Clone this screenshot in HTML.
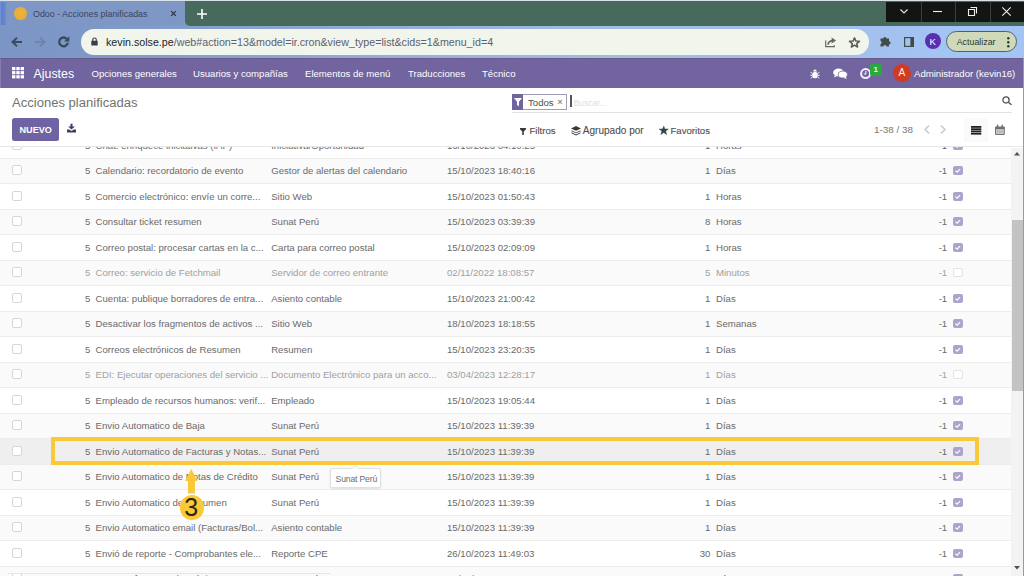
<!DOCTYPE html>
<html><head><meta charset="utf-8">
<style>
*{box-sizing:border-box;margin:0;padding:0}
html,body{width:1024px;height:576px;overflow:hidden;background:#fff;font-family:"Liberation Sans",sans-serif}
.a{position:absolute}
svg{position:absolute;overflow:visible}
#tabstrip{left:0;top:0;width:1024px;height:26px;background:#7e97c4}
.green{left:185px;top:0;width:839px;height:25.8px;background:#486a5c;border-bottom-left-radius:5px}
.topline{left:0;top:0;width:1024px;height:1.2px;background:#d9e2e6}
.tab{left:0;top:1.2px;width:185px;height:25px;background:#7e97c4}
.tabedge{left:0;top:1.5px;width:7px;height:23.5px;background:linear-gradient(90deg,#7d9ad6 0%,#5f80d0 20%,#6485cc 60%,#7e97c4 100%)}
.fav{left:14px;top:7.3px;width:13.2px;height:12.8px;border-radius:50%;background:radial-gradient(circle at 50% 45%,#ebb53c 0%,#e9ad3a 55%,#e6a640 100%)}
.tabtitle{left:33px;top:8.6px;font-size:8.9px;color:#3a4560;white-space:nowrap}
.winctl{left:886px;top:1.5px;width:138px;height:20.5px;background:#131514}
.sep{top:0;width:1px;height:20.5px;background:#3c3f3e}
#toolbar{left:0;top:25.5px;width:1024px;height:32.5px;background:linear-gradient(90deg,#7b96c4 0%,#7f9ac8 12%,#98b1dc 43%,#a2bfe2 62%,#a2bbe6 76%,#a4c4f4 92%,#a4c4f4 100%)}
.omni{left:81px;top:29px;width:788px;height:26px;border-radius:13px;background:#f2f5ec}
.url{left:106px;top:36.3px;font-size:10.7px;color:#5a6170;white-space:nowrap}
.url b{font-weight:normal;color:#20242c}
.upd{left:946.3px;top:31.3px;width:71.2px;height:20.8px;border-radius:11px;background:#d0dabb;border:1.2px solid #4f6268}
.upd span{position:absolute;left:9.4px;top:4.6px;font-size:8.85px;color:#2c3a32}
#navbar{left:0;top:58px;width:1024px;height:29.5px;background:#71649f;border-top:1.5px solid #675a8c;border-left:1.2px solid #877dad}
.nv{top:68.2px;font-size:9.6px;color:#fff;white-space:nowrap}
#cp{left:0;top:87.5px;width:1024px;height:59.8px;background:#fff;border-bottom:1px solid #e6e6e6}
.row{position:absolute;left:0;width:1011px;height:25.5px;border-top:1px solid #ececec;background:#fff}
.row.g{background:#fafafa}
.row.h{background:#efeff0}
.row span{position:absolute;top:6.8px;font-size:9.6px;color:#6a6a6a;white-space:nowrap}
.row.m span{color:#a0a0a0}
.row .sq{left:85px}
.row .nm{left:95.6px}
.row .md{left:271.2px}
.row .dt{left:447px}
.row .iv{right:300.6px}
.row .un{left:716px}
.row .pr{right:63.8px}
.cb{position:absolute;left:11.5px;top:6.6px;width:10px;height:10px;border:1px solid #d6d6d6;border-radius:2px;background:#fff}
.ck{position:absolute;left:953.3px;top:7.9px;width:9.5px;height:9px;border-radius:2px;background:#aba4cc}
.ck svg{left:0;top:0}
.ck.off{background:#fff;border:1px solid #e3e3e3}
.cpt{font-size:9.6px;color:#4e4e4e;white-space:nowrap;-webkit-text-stroke:0.1px #4e4e4e}
</style></head><body>

<div id="tabstrip" class="a">
  <div class="a green"></div>
  <div class="a topline"></div>
  <div class="a tab"></div>
  <div class="a tabedge"></div>
  <div class="a fav"></div>
  <div class="a tabtitle">Odoo - Acciones planificadas</div>
  <svg style="left:171px;top:10.8px" width="5" height="5"><path d="M0.2 0.2L4.8 4.8M4.8 0.2L0.2 4.8" stroke="#28324a" stroke-width="1.2"/></svg>
  <svg style="left:197px;top:8.5px" width="10" height="10"><path d="M5 0V10M0 5H10" stroke="#fff" stroke-width="1.6"/></svg>
  <div class="a winctl">
    <div class="a sep" style="left:34.5px"></div>
    <div class="a sep" style="left:68.5px"></div>
    <div class="a sep" style="left:103.5px"></div>
    <svg style="left:13.5px;top:7.5px" width="8" height="5"><path d="M0.5 0.5L4 4L7.5 0.5" fill="none" stroke="#e8e8e8" stroke-width="1.1"/></svg>
    <svg style="left:47px;top:9.5px" width="9" height="1"><path d="M0 0.5H9" stroke="#f0f0f0" stroke-width="1.1"/></svg>
    <svg style="left:82px;top:5px" width="9" height="9"><path d="M2.5 0.5H8.5V6.5M0.5 2.5H6.5V8.5H0.5Z" fill="none" stroke="#f0f0f0" stroke-width="1.1"/></svg>
    <svg style="left:116px;top:5px" width="9" height="9"><path d="M0.3 0.3L8.7 8.7M8.7 0.3L0.3 8.7" stroke="#f0f0f0" stroke-width="1.1"/></svg>
  </div>
</div>
<div id="toolbar" class="a"></div>
<!-- back / fwd / reload -->
<svg style="left:10.5px;top:37px" width="11" height="10"><path d="M11 5H2M6 0.8L1.5 5L6 9.2" fill="none" stroke="#3d4b60" stroke-width="2"/></svg>
<svg style="left:34.5px;top:37px" width="11" height="10"><path d="M0 5H9M5 0.8L9.5 5L5 9.2" fill="none" stroke="#7084a8" stroke-width="2"/></svg>
<svg style="left:58.2px;top:35.9px" width="11.5" height="11.5"><path d="M9.2 3.3A4.4 4.4 0 1 0 9.9 6.8" fill="none" stroke="#3d4b60" stroke-width="2.4"/><path d="M11.4 0.2V5.6H6Z" fill="#3d4b60"/></svg>
<div class="a omni"></div>
<svg style="left:90.8px;top:36.5px" width="7" height="9"><path d="M1.7 4V2.8A1.8 1.8 0 0 1 5.3 2.8V4" fill="none" stroke="#3a3f44" stroke-width="1.1"/><rect x="0.3" y="3.8" width="6.4" height="4.8" rx="0.6" fill="#3a3f44"/></svg>
<div class="a url"><b>kevin.solse.pe</b>/web#action=13&amp;model=ir.cron&amp;view_type=list&amp;cids=1&amp;menu_id=4</div>
<svg style="left:825px;top:36.5px" width="12" height="11"><path d="M0.7 3.5V9.6H9.3V8.3" fill="none" stroke="#666" stroke-width="1.2"/><path d="M3 7.6C3.3 5 5.2 3.6 8.5 3.6" fill="none" stroke="#666" stroke-width="1.7"/><path d="M6.6 0.6L11 3.6L6.6 6.4Z" fill="#666"/></svg>
<svg style="left:849px;top:36.5px" width="11" height="11"><path d="M5.5 0.9L6.9 4.1L10.5 4.3L7.7 6.6L8.6 10L5.5 8.1L2.4 10L3.3 6.6L0.5 4.3L4.1 4.1Z" fill="none" stroke="#5a5a5a" stroke-width="1.5" stroke-linejoin="round"/></svg>
<svg style="left:879.5px;top:36.2px" width="12" height="11"><path d="M0.5 2.6H3.3A1.6 1.6 0 0 1 6.5 2.6H9V5.2A1.6 1.6 0 0 1 9 8.4V10.5H6.5A1.6 1.6 0 0 0 3.3 10.5H0.5V8A1.6 1.6 0 0 0 0.5 4.9Z" fill="#3e4d48"/></svg>
<svg style="left:903.5px;top:37px" width="10" height="10"><rect x="0.6" y="0.6" width="8.8" height="8.8" fill="none" stroke="#3e4d48" stroke-width="1.2"/><rect x="6.4" y="0.6" width="3" height="8.8" fill="#3e4d48"/></svg>
<div class="a" style="left:924.8px;top:33.4px;width:16px;height:16px;border-radius:50%;background:#5a2eae"></div>
<div class="a" style="left:929.6px;top:36.4px;font-size:9.6px;color:#fff">K</div>
<div class="a upd"><span>Actualizar</span></div>
<svg style="left:1006.5px;top:37px" width="3" height="11"><circle cx="1.3" cy="1.3" r="1.2" fill="#2c3a32"/><circle cx="1.3" cy="5.3" r="1.2" fill="#2c3a32"/><circle cx="1.3" cy="9.3" r="1.2" fill="#2c3a32"/></svg>

<div id="navbar" class="a"></div>
<svg style="left:12.2px;top:66.8px" width="12" height="11.5"><g fill="#fff"><rect x="0" y="0" width="3.4" height="3.2"/><rect x="4.3" y="0" width="3.4" height="3.2"/><rect x="8.6" y="0" width="3.4" height="3.2"/><rect x="0" y="4.1" width="3.4" height="3.2"/><rect x="4.3" y="4.1" width="3.4" height="3.2"/><rect x="8.6" y="4.1" width="3.4" height="3.2"/><rect x="0" y="8.2" width="3.4" height="3.2"/><rect x="4.3" y="8.2" width="3.4" height="3.2"/><rect x="8.6" y="8.2" width="3.4" height="3.2"/></g></svg>
<div class="a" style="left:33.5px;top:66.8px;font-size:12.4px;color:#fff">Ajustes</div>
<div class="a nv" style="left:91.5px">Opciones generales</div>
<div class="a nv" style="left:193px">Usuarios y compañías</div>
<div class="a nv" style="left:305px">Elementos de menú</div>
<div class="a nv" style="left:408px">Traducciones</div>
<div class="a nv" style="left:482px">Técnico</div>
<!-- bug -->
<svg style="left:809.8px;top:68.5px" width="10" height="10"><path d="M3.2 2.4A1.8 1.8 0 0 1 6.8 2.4Z" fill="#fff"/><rect x="2.3" y="3" width="5.4" height="6.2" rx="2.2" fill="#fff"/><path d="M0.5 3.3L2.4 4.4M9.5 3.3L7.6 4.4M0.3 6.3H2.3M9.7 6.3H7.7M0.8 9.3L2.6 7.9M9.2 9.3L7.4 7.9" stroke="#fff" stroke-width="0.9"/></svg>
<!-- chat -->
<svg style="left:832.5px;top:68px" width="15" height="12"><ellipse cx="5.5" cy="4.5" rx="5.3" ry="3.9" fill="#fff"/><path d="M1.8 7.2L1 9.5L4 8" fill="#fff"/><ellipse cx="9.8" cy="6.6" rx="4.6" ry="3.5" fill="#fff" stroke="#71649f" stroke-width="0.8"/><path d="M12.6 8.8L13.8 11L10.8 9.9" fill="#fff"/></svg>
<!-- clock -->
<svg style="left:860px;top:67.6px" width="11.5" height="11.5"><circle cx="5.6" cy="5.6" r="4.5" fill="none" stroke="#f4f0ff" stroke-width="2"/><path d="M5.8 3V6H3.8" fill="none" stroke="#f4f0ff" stroke-width="1.1"/></svg>
<div class="a" style="left:870.4px;top:64.2px;width:11.8px;height:12px;border-radius:2px;background:#2aa840"></div>
<div class="a" style="left:873.6px;top:65.2px;font-size:8px;font-weight:bold;color:#eaf6ea">1</div>
<div class="a" style="left:893.4px;top:64.1px;width:17.8px;height:17.8px;border-radius:50%;background:#d03b24"></div>
<div class="a" style="left:898.6px;top:67.3px;font-size:10.2px;color:#fbeee8">A</div>
<div class="a nv" style="left:914px">Administrador (kevin16)</div>

<div id="list" class="a" style="left:0;top:0;width:1024px;height:576px;overflow:hidden">
<div class="row" style="top:132.10px"><i class="cb"></i><span class="sq">5</span><span class="nm">Chat: enriquece iniciativas (IAP)</span><span class="md">Iniciativa/Oportunidad</span><span class="dt">16/10/2023 04:10:25</span><span class="iv">1</span><span class="un">Horas</span><span class="pr">-1</span><i class="ck"><svg width="9.5" height="9" viewBox="0 0 10 9"><path d="M2.6 4.6 L4.3 6.2 L7.4 3" fill="none" stroke="#fff" stroke-width="1.3"/></svg></i></div>
<div class="row g" style="top:157.60px"><i class="cb"></i><span class="sq">5</span><span class="nm">Calendario: recordatorio de evento</span><span class="md">Gestor de alertas del calendario</span><span class="dt">15/10/2023 18:40:16</span><span class="iv">1</span><span class="un">Días</span><span class="pr">-1</span><i class="ck"><svg width="9.5" height="9" viewBox="0 0 10 9"><path d="M2.6 4.6 L4.3 6.2 L7.4 3" fill="none" stroke="#fff" stroke-width="1.3"/></svg></i></div>
<div class="row" style="top:183.10px"><i class="cb"></i><span class="sq">5</span><span class="nm">Comercio electrónico: envíe un corre...</span><span class="md">Sitio Web</span><span class="dt">15/10/2023 01:50:43</span><span class="iv">1</span><span class="un">Horas</span><span class="pr">-1</span><i class="ck"><svg width="9.5" height="9" viewBox="0 0 10 9"><path d="M2.6 4.6 L4.3 6.2 L7.4 3" fill="none" stroke="#fff" stroke-width="1.3"/></svg></i></div>
<div class="row g" style="top:208.60px"><i class="cb"></i><span class="sq">5</span><span class="nm">Consultar ticket resumen</span><span class="md">Sunat Perú</span><span class="dt">15/10/2023 03:39:39</span><span class="iv">8</span><span class="un">Horas</span><span class="pr">-1</span><i class="ck"><svg width="9.5" height="9" viewBox="0 0 10 9"><path d="M2.6 4.6 L4.3 6.2 L7.4 3" fill="none" stroke="#fff" stroke-width="1.3"/></svg></i></div>
<div class="row" style="top:234.10px"><i class="cb"></i><span class="sq">5</span><span class="nm">Correo postal: procesar cartas en la c...</span><span class="md">Carta para correo postal</span><span class="dt">15/10/2023 02:09:09</span><span class="iv">1</span><span class="un">Horas</span><span class="pr">-1</span><i class="ck"><svg width="9.5" height="9" viewBox="0 0 10 9"><path d="M2.6 4.6 L4.3 6.2 L7.4 3" fill="none" stroke="#fff" stroke-width="1.3"/></svg></i></div>
<div class="row g m" style="top:259.60px"><i class="cb"></i><span class="sq">5</span><span class="nm">Correo: servicio de Fetchmail</span><span class="md">Servidor de correo entrante</span><span class="dt">02/11/2022 18:08:57</span><span class="iv">5</span><span class="un">Minutos</span><span class="pr">-1</span><i class="ck off"></i></div>
<div class="row" style="top:285.10px"><i class="cb"></i><span class="sq">5</span><span class="nm">Cuenta: publique borradores de entra...</span><span class="md">Asiento contable</span><span class="dt">15/10/2023 21:00:42</span><span class="iv">1</span><span class="un">Días</span><span class="pr">-1</span><i class="ck"><svg width="9.5" height="9" viewBox="0 0 10 9"><path d="M2.6 4.6 L4.3 6.2 L7.4 3" fill="none" stroke="#fff" stroke-width="1.3"/></svg></i></div>
<div class="row g" style="top:310.60px"><i class="cb"></i><span class="sq">5</span><span class="nm">Desactivar los fragmentos de activos ...</span><span class="md">Sitio Web</span><span class="dt">18/10/2023 18:18:55</span><span class="iv">1</span><span class="un">Semanas</span><span class="pr">-1</span><i class="ck"><svg width="9.5" height="9" viewBox="0 0 10 9"><path d="M2.6 4.6 L4.3 6.2 L7.4 3" fill="none" stroke="#fff" stroke-width="1.3"/></svg></i></div>
<div class="row" style="top:336.10px"><i class="cb"></i><span class="sq">5</span><span class="nm">Correos electrónicos de Resumen</span><span class="md">Resumen</span><span class="dt">15/10/2023 23:20:35</span><span class="iv">1</span><span class="un">Días</span><span class="pr">-1</span><i class="ck"><svg width="9.5" height="9" viewBox="0 0 10 9"><path d="M2.6 4.6 L4.3 6.2 L7.4 3" fill="none" stroke="#fff" stroke-width="1.3"/></svg></i></div>
<div class="row g m" style="top:361.60px"><i class="cb"></i><span class="sq">5</span><span class="nm">EDI: Ejecutar operaciones del servicio ...</span><span class="md">Documento Electrónico para un acco...</span><span class="dt">03/04/2023 12:28:17</span><span class="iv">1</span><span class="un">Días</span><span class="pr">-1</span><i class="ck off"></i></div>
<div class="row" style="top:387.10px"><i class="cb"></i><span class="sq">5</span><span class="nm">Empleado de recursos humanos: verif...</span><span class="md">Empleado</span><span class="dt">15/10/2023 19:05:44</span><span class="iv">1</span><span class="un">Días</span><span class="pr">-1</span><i class="ck"><svg width="9.5" height="9" viewBox="0 0 10 9"><path d="M2.6 4.6 L4.3 6.2 L7.4 3" fill="none" stroke="#fff" stroke-width="1.3"/></svg></i></div>
<div class="row g" style="top:412.60px"><i class="cb"></i><span class="sq">5</span><span class="nm">Envio Automatico de Baja</span><span class="md">Sunat Perú</span><span class="dt">15/10/2023 11:39:39</span><span class="iv">1</span><span class="un">Días</span><span class="pr">-1</span><i class="ck"><svg width="9.5" height="9" viewBox="0 0 10 9"><path d="M2.6 4.6 L4.3 6.2 L7.4 3" fill="none" stroke="#fff" stroke-width="1.3"/></svg></i></div>
<div class="row h" style="top:438.10px"><i class="cb"></i><span class="sq">5</span><span class="nm">Envio Automatico de Facturas y Notas...</span><span class="md">Sunat Perú</span><span class="dt">15/10/2023 11:39:39</span><span class="iv">1</span><span class="un">Días</span><span class="pr">-1</span><i class="ck"><svg width="9.5" height="9" viewBox="0 0 10 9"><path d="M2.6 4.6 L4.3 6.2 L7.4 3" fill="none" stroke="#fff" stroke-width="1.3"/></svg></i></div>
<div class="row g" style="top:463.60px"><i class="cb"></i><span class="sq">5</span><span class="nm">Envio Automatico de Notas de Crédito</span><span class="md">Sunat Perú</span><span class="dt">15/10/2023 11:39:39</span><span class="iv">1</span><span class="un">Días</span><span class="pr">-1</span><i class="ck"><svg width="9.5" height="9" viewBox="0 0 10 9"><path d="M2.6 4.6 L4.3 6.2 L7.4 3" fill="none" stroke="#fff" stroke-width="1.3"/></svg></i></div>
<div class="row" style="top:489.10px"><i class="cb"></i><span class="sq">5</span><span class="nm">Envio Automatico de Resumen</span><span class="md">Sunat Perú</span><span class="dt">15/10/2023 11:39:39</span><span class="iv">1</span><span class="un">Días</span><span class="pr">-1</span><i class="ck"><svg width="9.5" height="9" viewBox="0 0 10 9"><path d="M2.6 4.6 L4.3 6.2 L7.4 3" fill="none" stroke="#fff" stroke-width="1.3"/></svg></i></div>
<div class="row g" style="top:514.60px"><i class="cb"></i><span class="sq">5</span><span class="nm">Envio Automatico email (Facturas/Bol...</span><span class="md">Asiento contable</span><span class="dt">15/10/2023 11:39:39</span><span class="iv">1</span><span class="un">Días</span><span class="pr">-1</span><i class="ck"><svg width="9.5" height="9" viewBox="0 0 10 9"><path d="M2.6 4.6 L4.3 6.2 L7.4 3" fill="none" stroke="#fff" stroke-width="1.3"/></svg></i></div>
<div class="row" style="top:540.10px"><i class="cb"></i><span class="sq">5</span><span class="nm">Envió de reporte - Comprobantes ele...</span><span class="md">Reporte CPE</span><span class="dt">26/10/2023 11:49:03</span><span class="iv">30</span><span class="un">Días</span><span class="pr">-1</span><i class="ck"><svg width="9.5" height="9" viewBox="0 0 10 9"><path d="M2.6 4.6 L4.3 6.2 L7.4 3" fill="none" stroke="#fff" stroke-width="1.3"/></svg></i></div>
<div class="row g" style="top:565.60px"><i class="cb"></i><span class="sq">5</span><span class="nm">Exportar facturas electrónicas</span><span class="md">Sunat Perú</span><span class="dt">15/10/2023 11:39:39</span><span class="iv">1</span><span class="un">Días</span><span class="pr">-1</span><i class="ck"><svg width="9.5" height="9" viewBox="0 0 10 9"><path d="M2.6 4.6 L4.3 6.2 L7.4 3" fill="none" stroke="#fff" stroke-width="1.3"/></svg></i></div>
</div>

<div class="a" style="left:8px;top:573.4px;width:322px;height:1px;background:#e6e6e6"></div>
<!-- tooltip -->
<div class="a" style="left:330.2px;top:468.2px;width:50.5px;height:20px;background:#fff;border:1px solid #e0e0e0;border-radius:2px;box-shadow:0 1px 2px rgba(0,0,0,.10)"></div>
<div class="a" style="left:353px;top:466px;width:5px;height:5px;background:#fff;border-left:1px solid #e6e6e6;border-top:1px solid #e6e6e6;transform:rotate(45deg)"></div>
<div class="a" style="left:335.6px;top:474px;font-size:8.6px;letter-spacing:-0.15px;color:#6c6c6c">Sunat Perú</div>

<!-- yellow highlight -->
<div class="a" style="left:50.5px;top:436.8px;width:928.5px;height:28.1px;border:4px solid #fbc937"></div>
<svg style="left:184.5px;top:469px" width="13" height="25"><path d="M6.3 0L12.5 12H9.9V24.5H3V12H0Z" fill="#fbc937"/></svg>
<div class="a" style="left:179.5px;top:495px;width:24.5px;height:24.5px;border-radius:50%;background:#fbc937"></div>
<div class="a" style="left:184.3px;top:493px;font-size:25px;color:#2f2614">3</div>

<!-- control panel -->
<div id="cp" class="a"></div>
<div class="a" style="left:12px;top:95.4px;font-size:13.05px;color:#727272">Acciones planificadas</div>
<div class="a" style="left:12px;top:117.5px;width:47.2px;height:23px;border-radius:2.5px;background:#7063a3"></div>
<div class="a" style="left:19.5px;top:124.5px;font-size:9.1px;font-weight:bold;color:#fff">NUEVO</div>
<svg style="left:66px;top:123px" width="11" height="10"><path d="M4.5 0.8H6.5V3.6H8.9L5.5 6.4L2.1 3.6H4.5Z" fill="#3f3d5e"/><path d="M1 6.4H3.4L5.5 8L7.6 6.4H10V9.5H1Z" fill="#3f3d5e"/></svg>

<!-- search -->
<div class="a" style="left:512px;top:93.6px;width:11.3px;height:16.1px;background:#71649f"></div>
<svg style="left:514px;top:97.5px" width="8" height="8.5"><path d="M0 0H8L5 3.8V8.2L3 7V3.8Z" fill="#fff"/></svg>
<div class="a" style="left:523px;top:93.6px;width:44px;height:16.1px;border:1px solid #a09cb6;border-left:none"></div>
<div class="a" style="left:528px;top:97px;font-size:9.6px;color:#4d4d4d">Todos</div>
<div class="a" style="left:557.6px;top:97px;font-size:8.5px;font-weight:bold;color:#8a8a8a">×</div>
<div class="a" style="left:570.3px;top:95px;width:1.4px;height:12.2px;background:#555"></div>
<div class="a" style="left:573.4px;top:97.5px;font-size:8.6px;color:#dedede">Buscar...</div>
<div class="a" style="left:512px;top:112px;width:500px;height:1px;background:#e2e2e2"></div>
<svg style="left:1001.5px;top:95.8px" width="11" height="9"><circle cx="4" cy="3.9" r="3.1" fill="none" stroke="#4f4f4f" stroke-width="1.3"/><path d="M6.3 6.2L9.5 8.8" stroke="#4f4f4f" stroke-width="1.4"/></svg>

<!-- filters -->
<svg style="left:520px;top:127.5px" width="6" height="7"><path d="M0 0H6V1.2L3.8 3.4V7H2.2V3.4L0 1.2Z" fill="#3a3a3a"/></svg>
<div class="a cpt" style="left:529.5px;top:125.3px">Filtros</div>
<svg style="left:570.6px;top:126px" width="10" height="9"><path d="M5 0L10 2.4L5 4.8L0 2.4Z" fill="#3a3a3a"/><path d="M0.9 4.4L5 6.4L9.1 4.4L10 4.9L5 7.3L0 4.9Z" fill="#3a3a3a"/><path d="M0.9 6.6L5 8.6L9.1 6.6L10 7.1L5 9.5L0 7.1Z" fill="#3a3a3a"/></svg>
<div class="a cpt" style="left:582.8px;top:125.1px;font-size:10.05px">Agrupado por</div>
<svg style="left:659px;top:125.5px" width="9.5" height="9"><path d="M4.75 0.2L5.9 3.1H9.3L6.6 5.1L7.6 8.5L4.75 6.5L1.9 8.5L2.9 5.1L0.2 3.1H3.6Z" fill="#34404e" stroke="#34404e" stroke-width="0.5" stroke-linejoin="round"/></svg>
<div class="a cpt" style="left:670.5px;top:125.3px">Favoritos</div>

<!-- pager -->
<div class="a" style="left:874px;top:123.6px;font-size:9.9px;color:#777">1-38 / 38</div>
<svg style="left:924px;top:124.5px" width="6" height="9"><path d="M5 0.6L1 4.5L5 8.4" fill="none" stroke="#cccccc" stroke-width="1.6"/></svg>
<svg style="left:939.8px;top:124.5px" width="6" height="9"><path d="M1 0.6L5 4.5L1 8.4" fill="none" stroke="#cccccc" stroke-width="1.6"/></svg>
<div class="a" style="left:964px;top:118px;width:24.2px;height:23.5px;background:#f9fafb"></div>
<svg style="left:971px;top:125.8px" width="10.3" height="8.6"><g fill="#1e1e1e"><rect x="0" y="0" width="10.3" height="1.8"/><rect x="0" y="2.3" width="10.3" height="1.8"/><rect x="0" y="4.5" width="10.3" height="1.8"/><rect x="0" y="6.8" width="10.3" height="1.8"/></g></svg>
<svg style="left:995px;top:124.8px" width="9.8" height="10"><path d="M0.5 2H9.3V9.5H0.5Z" fill="#d4d4d4" stroke="#727272" stroke-width="1"/><rect x="0.5" y="2" width="8.8" height="2.2" fill="#727272"/><path d="M2.6 4.2V9.5M4.9 4.2V9.5M7.2 4.2V9.5M0.5 6.8H9.3" stroke="#9a9a9a" stroke-width="0.5"/><path d="M2.6 0.3V2.5M7.2 0.3V2.5" stroke="#727272" stroke-width="1.5" stroke-linecap="round"/></svg>

<!-- scrollbar -->
<div class="a" style="left:1011px;top:147.6px;width:12px;height:428.4px;background:#f3f3f3"></div>
<div class="a" style="left:1012px;top:220px;width:10.5px;height:171px;background:#c3c3c3"></div>
<svg style="left:1014.4px;top:152px" width="6" height="4"><path d="M3 0L6 3.5H0Z" fill="#505050"/></svg>
<svg style="left:1014.2px;top:565.8px" width="6" height="4"><path d="M0 0H6L3 3.5Z" fill="#505050"/></svg>
<div class="a" style="left:1023px;top:58px;width:1px;height:518px;background:#9a9a9a"></div>

</body></html>
